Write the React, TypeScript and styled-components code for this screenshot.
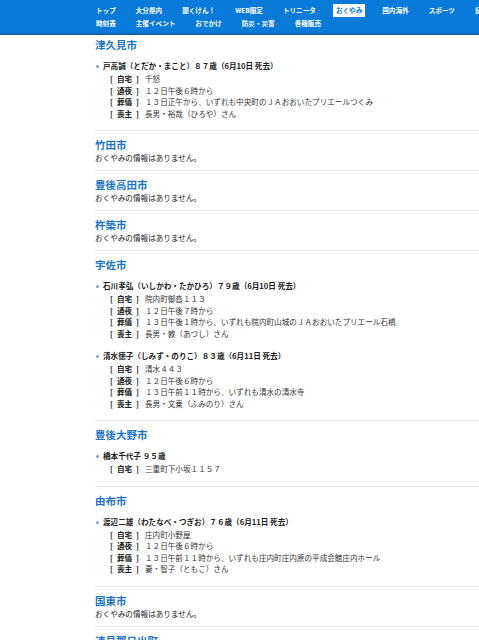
import React from 'react';
import styled, { createGlobalStyle } from 'styled-components';

type Detail = { label: string; value: string };
type Person = { name: string; details: Detail[] };
type Area = { city: string; people: Person[] };

const navRows: string[][] = [
	['トップ', '大分県内', '聞くけん！', 'WEB限定', 'トリニータ', 'おくやみ', '国内海外', 'スポーツ', '記事一覧'],
	['時刻表', '主催イベント', 'おでかけ', '防災・災害', '各種販売'],
];

const areas: Area[] = [
	{
		city: '津久見市',
		people: [
			{
				name: '戸高誠（とだか・まこと）８７歳（6月10日 死去）',
				details: [
					{ label: '自宅', value: '千怒' },
					{ label: '通夜', value: '１２日午後６時から' },
					{ label: '葬儀', value: '１３日正午から、いずれも中央町のＪＡおおいたプリエールつくみ' },
					{ label: '喪主', value: '長男・裕哉（ひろや）さん' },
				],
			},
		],
	},
	{ city: '竹田市', people: [] },
	{ city: '豊後高田市', people: [] },
	{ city: '杵築市', people: [] },
	{
		city: '宇佐市',
		people: [
			{
				name: '石川孝弘（いしかわ・たかひろ）７９歳（6月10日 死去）',
				details: [
					{ label: '自宅', value: '院内町御沓１１３' },
					{ label: '通夜', value: '１２日午後７時から' },
					{ label: '葬儀', value: '１３日午後１時から、いずれも院内町山城のＪＡおおいたプリエール石橋' },
					{ label: '喪主', value: '長男・敦（あつし）さん' },
				],
			},
			{
				name: '清水徳子（しみず・のりこ）８３歳（6月11日 死去）',
				details: [
					{ label: '自宅', value: '清水４４３' },
					{ label: '通夜', value: '１２日午後６時から' },
					{ label: '葬儀', value: '１３日午前１１時から、いずれも清水の清水寺' },
					{ label: '喪主', value: '長男・文乗（ふみのり）さん' },
				],
			},
		],
	},
	{
		city: '豊後大野市',
		people: [
			{
				name: '橋本千代子 ９５歳',
				details: [{ label: '自宅', value: '三重町下小坂１１５７' }],
			},
		],
	},
	{
		city: '由布市',
		people: [
			{
				name: '渡辺二雄（わたなべ・つぎお）７６歳（6月11日 死去）',
				details: [
					{ label: '自宅', value: '庄内町小野屋' },
					{ label: '通夜', value: '１２日午後６時から' },
					{ label: '葬儀', value: '１３日午前１１時から、いずれも庄内町庄内原の平成会館庄内ホール' },
					{ label: '喪主', value: '妻・智子（ともこ）さん' },
				],
			},
		],
	},
	{ city: '国東市', people: [] },
	{ city: '速見郡日出町', people: [] },
];

export default function App() {
	return (
		<>
			<GlobalStyle />
			<Header>
				{navRows.map((row, i) => (
					<NavRow key={i}>
						{row.map((item) => (
							<NavItem key={item} $active={item === 'おくやみ'}>
								{item}
							</NavItem>
						))}
					</NavRow>
				))}
			</Header>
			<Main>
				{areas.map((area) => (
					<Section key={area.city}>
						<CityTitle>{area.city}</CityTitle>
						{area.people.length === 0 ? (
							<Empty>おくやみの情報はありません。</Empty>
						) : (
							<PersonList>
								{area.people.map((p) => (
									<PersonItem key={p.name}>
										<PersonName>{p.name}</PersonName>
										{p.details.map((d) => (
											<DetailRow key={d.label}>
												<Label>
													<span>[</span>
													<span>{d.label}</span>
													<span>]</span>
												</Label>
												{d.value}
											</DetailRow>
										))}
									</PersonItem>
								))}
							</PersonList>
						)}
					</Section>
				))}
			</Main>
		</>
	);
}

const GlobalStyle = createGlobalStyle`
	html {
		overflow: hidden;
	}
	body {
		margin: 0;
		background: #fff;
		color: #222;
		font-family: "Noto Sans CJK JP", "Noto Sans", sans-serif;
	}
`;

const Header = styled.header`
	height: 33px;
	padding: 4px 0 0 93px;
	box-sizing: border-box;
	background: #0a7ad8;
	border-bottom: 2px solid #1462a8;
	box-sizing: content-box;
	height: 29px;
	overflow: hidden;
`;

const NavRow = styled.ul`
	display: flex;
	flex-wrap: nowrap;
	gap: 14px;
	margin: 0;
	padding: 0;
	list-style: none;
	white-space: nowrap;
`;

const NavItem = styled.li<{ $active?: boolean }>`
	padding: 1px 3px;
	font-size: 6.6px;
	line-height: 11px;
	font-weight: 700;
	color: ${(p) => (p.$active ? '#0a7ad8' : '#fff')};
	background: ${(p) => (p.$active ? '#fff' : 'transparent')};
`;

const Main = styled.main`
	padding-left: 95px;
`;

const Section = styled.section`
	padding: 7px 0 6px;
	border-bottom: 1px solid #e6e6e6;

	&:first-child {
		padding-top: 3px;
	}
`;

const CityTitle = styled.h2`
	margin: 0;
	font-size: 10.5px;
	line-height: 14px;
	font-weight: 700;
	color: #1b74c5;
`;

const Empty = styled.p`
	margin: 0;
	font-size: 7.6px;
	line-height: 12px;
	color: #222;
`;

const PersonList = styled.ul`
	margin: 7px 0 5px;
	padding: 0;
	list-style: none;
`;

const PersonItem = styled.li`
	& + & {
		margin-top: 10px;
	}
`;

const PersonName = styled.div`
	position: relative;
	padding-left: 8px;
	font-size: 7.6px;
	line-height: 14px;
	font-weight: 700;
	color: #222;

	&::before {
		content: '';
		position: absolute;
		left: 1px;
		top: 6px;
		width: 3px;
		height: 3px;
		border-radius: 50%;
		background: #7f9fc4;
	}
`;

const DetailRow = styled.div`
	display: flex;
	align-items: center;
	padding-left: 15px;
	font-size: 7.6px;
	line-height: 11.5px;
	color: #333;
	white-space: nowrap;
`;

const Label = styled.span`
	display: inline-flex;
	gap: 4px;
	width: 30px;
	margin-right: 5px;
	font-weight: 700;
	color: #222;
`;
